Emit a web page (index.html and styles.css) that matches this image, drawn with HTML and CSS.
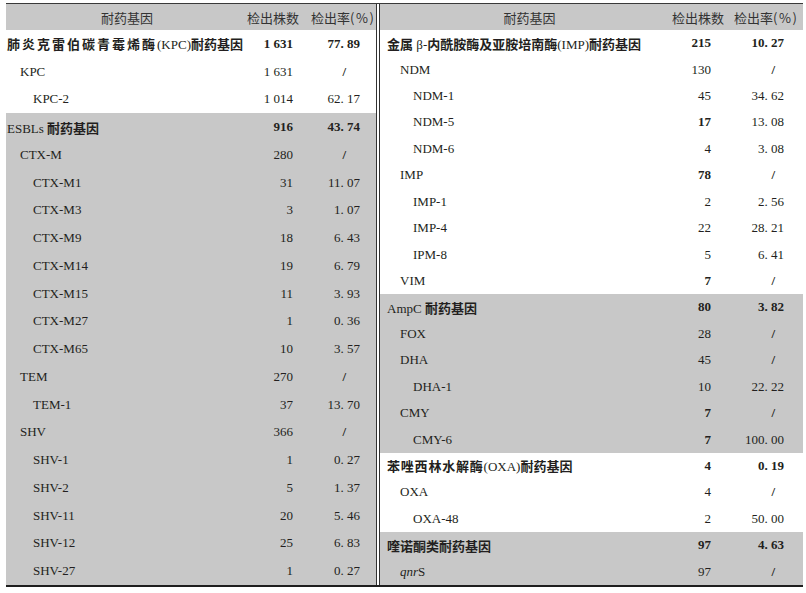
FILE: index.html
```html
<!DOCTYPE html>
<html lang="zh">
<head>
<meta charset="utf-8">
<title>耐药基因检出情况</title>
<link rel="stylesheet" href="styles.css">
</head>
<body>
<div class="table">
  <div class="half left">
    <div class="head"><span class="name">耐药基因</span><span class="n">检出株数</span><span class="r">检出率<span class="pct">(%)</span></span></div>
    <div class="body">
      <div class="row sec"><span class="name"><span class="cn sp2">肺炎克雷伯碳青霉烯酶</span>(KPC)<span class="cn">耐药基因</span></span><span class="n">1 631</span><span class="r">77. 89</span></div>
      <div class="row"><span class="name l1">KPC</span><span class="n">1 631</span><span class="r na">/</span></div>
      <div class="row"><span class="name l2">KPC-2</span><span class="n">1 014</span><span class="r">62. 17</span></div>
      <div class="row sec gray"><span class="name">ESBLs <span class="cn">耐药基因</span></span><span class="n">916</span><span class="r">43. 74</span></div>
      <div class="row gray"><span class="name l1">CTX-M</span><span class="n">280</span><span class="r na">/</span></div>
      <div class="row gray"><span class="name l2">CTX-M1</span><span class="n">31</span><span class="r">11. 07</span></div>
      <div class="row gray"><span class="name l2">CTX-M3</span><span class="n">3</span><span class="r">1. 07</span></div>
      <div class="row gray"><span class="name l2">CTX-M9</span><span class="n">18</span><span class="r">6. 43</span></div>
      <div class="row gray"><span class="name l2">CTX-M14</span><span class="n">19</span><span class="r">6. 79</span></div>
      <div class="row gray"><span class="name l2">CTX-M15</span><span class="n">11</span><span class="r">3. 93</span></div>
      <div class="row gray"><span class="name l2">CTX-M27</span><span class="n">1</span><span class="r">0. 36</span></div>
      <div class="row gray"><span class="name l2">CTX-M65</span><span class="n">10</span><span class="r">3. 57</span></div>
      <div class="row gray"><span class="name l1">TEM</span><span class="n">270</span><span class="r na">/</span></div>
      <div class="row gray"><span class="name l2">TEM-1</span><span class="n">37</span><span class="r">13. 70</span></div>
      <div class="row gray"><span class="name l1">SHV</span><span class="n">366</span><span class="r na">/</span></div>
      <div class="row gray"><span class="name l2">SHV-1</span><span class="n">1</span><span class="r">0. 27</span></div>
      <div class="row gray"><span class="name l2">SHV-2</span><span class="n">5</span><span class="r">1. 37</span></div>
      <div class="row gray"><span class="name l2">SHV-11</span><span class="n">20</span><span class="r">5. 46</span></div>
      <div class="row gray"><span class="name l2">SHV-12</span><span class="n">25</span><span class="r">6. 83</span></div>
      <div class="row gray"><span class="name l2">SHV-27</span><span class="n">1</span><span class="r">0. 27</span></div>
    </div>
  </div>
  <div class="divider"></div>
  <div class="half right">
    <div class="head"><span class="name">耐药基因</span><span class="n">检出株数</span><span class="r">检出率<span class="pct">(%)</span></span></div>
    <div class="body">
      <div class="row sec"><span class="name"><span class="cn">金属</span> β-<span class="cn">内酰胺酶及亚胺培南酶</span>(IMP)<span class="cn">耐药基因</span></span><span class="n">215</span><span class="r">10. 27</span></div>
      <div class="row"><span class="name l1">NDM</span><span class="n">130</span><span class="r na">/</span></div>
      <div class="row"><span class="name l2">NDM-1</span><span class="n">45</span><span class="r">34. 62</span></div>
      <div class="row"><span class="name l2">NDM-5</span><span class="n b">17</span><span class="r">13. 08</span></div>
      <div class="row"><span class="name l2">NDM-6</span><span class="n">4</span><span class="r">3. 08</span></div>
      <div class="row"><span class="name l1">IMP</span><span class="n b">78</span><span class="r na">/</span></div>
      <div class="row"><span class="name l2">IMP-1</span><span class="n">2</span><span class="r">2. 56</span></div>
      <div class="row"><span class="name l2">IMP-4</span><span class="n">22</span><span class="r">28. 21</span></div>
      <div class="row"><span class="name l2">IPM-8</span><span class="n">5</span><span class="r">6. 41</span></div>
      <div class="row"><span class="name l1">VIM</span><span class="n b">7</span><span class="r na">/</span></div>
      <div class="row sec gray"><span class="name">AmpC <span class="cn">耐药基因</span></span><span class="n">80</span><span class="r">3. 82</span></div>
      <div class="row gray"><span class="name l1">FOX</span><span class="n">28</span><span class="r na">/</span></div>
      <div class="row gray"><span class="name l1">DHA</span><span class="n">45</span><span class="r na">/</span></div>
      <div class="row gray"><span class="name l2">DHA-1</span><span class="n">10</span><span class="r">22. 22</span></div>
      <div class="row gray"><span class="name l1">CMY</span><span class="n b">7</span><span class="r na">/</span></div>
      <div class="row gray"><span class="name l2">CMY-6</span><span class="n b">7</span><span class="r">100. 00</span></div>
      <div class="row sec"><span class="name"><span class="cn sp1">苯唑西林水解酶</span>(OXA)<span class="cn">耐药基因</span></span><span class="n">4</span><span class="r">0. 19</span></div>
      <div class="row"><span class="name l1">OXA</span><span class="n">4</span><span class="r na">/</span></div>
      <div class="row"><span class="name l2">OXA-48</span><span class="n">2</span><span class="r">50. 00</span></div>
      <div class="row sec gray"><span class="name"><span class="cn">喹诺酮类耐药基因</span></span><span class="n">97</span><span class="r">4. 63</span></div>
      <div class="row gray"><span class="name l1"><i>qnr</i>S</span><span class="n">97</span><span class="r na">/</span></div>
    </div>
  </div>
</div>
</body>
</html>
```

FILE: styles.css
```css
html, body {
  margin: 0;
  padding: 0;
  background: #fff;
}

body {
  font-family: "Liberation Serif", "Noto Sans CJK SC", serif;
  font-size: 13px;
  color: #231f20;
}

.table {
  margin: 3px 0 0 6px;
  width: 797px;
  height: 581px;
  border-top: 1px solid #3a3a3a;
  border-bottom: 2px solid #1e1e1e;
  display: flex;
}

.half {
  display: flex;
  flex-direction: column;
}

.left { width: 370px; }
.right { width: 423px; }

.divider {
  width: 2px;
  border-left: 1px solid #333;
  border-right: 1px solid #333;
  background: #fff;
}

.head {
  height: 26px;
  flex: none;
  background: #c8c8c8;
  display: flex;
  align-items: center;
  font-family: "Noto Sans CJK SC", sans-serif;
  color: #333;
  font-size: 13px;
}

.head .name { text-align: center; padding: 0; }
.head .n, .head .r { text-align: center; padding: 0; }
.head .pct { letter-spacing: 1.5px; }
.left .head .r { padding-left: 4px; }
.right .head .r { padding-left: 2px; }

.body {
  flex: 1;
  display: flex;
  flex-direction: column;
}

.row {
  flex: 1;
  display: flex;
  align-items: center;
}

.gray { background: #c8c8c8; }

.name {
  flex: 1;
  white-space: nowrap;
}

.left .name { padding-left: 1px; }
.right .name { padding-left: 7px; }

.left .name.l1 { padding-left: 14px; }
.left .name.l2 { padding-left: 27px; }
.right .name.l1 { padding-left: 20px; }
.right .name.l2 { padding-left: 33px; }

.n, .r {
  text-align: right;
  white-space: nowrap;
}

.left .n { width: 60px; padding-right: 14px; box-sizing: border-box; }
.left .r { width: 69px; padding-right: 16px; box-sizing: border-box; }
.right .n { width: 60px; padding-right: 21px; box-sizing: border-box; }
.right .r { width: 71px; padding-right: 19px; box-sizing: border-box; }

.left .r.na { padding-right: 30px; }
.right .r.na { padding-right: 28px; }

.na { font-weight: bold; }

.sec .n, .sec .r, .b { font-weight: bold; }

.cn {
  font-family: "Noto Sans CJK SC", sans-serif;
  font-weight: 700;
}

.sp2 { letter-spacing: 2px; }
.sp1 { letter-spacing: 0.8px; }
```
